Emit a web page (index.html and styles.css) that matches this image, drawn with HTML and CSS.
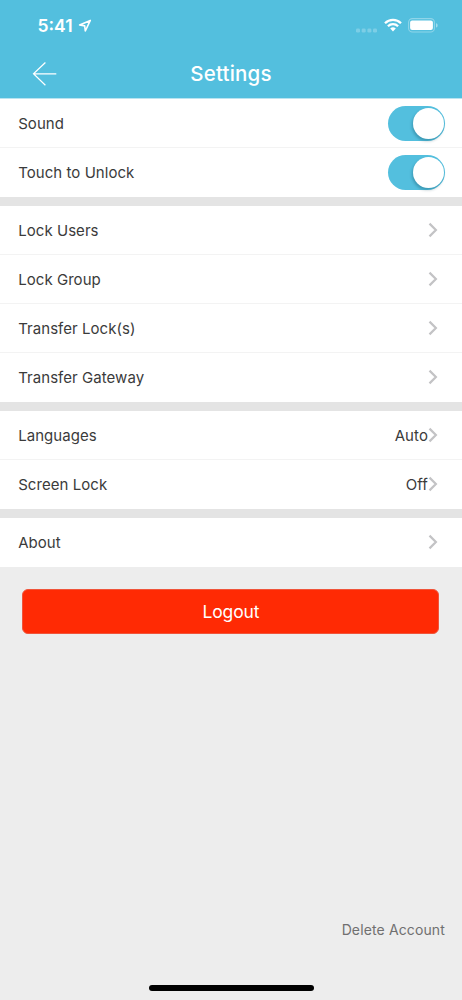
FILE: index.html
```html
<!DOCTYPE html>
<html lang="en">
<head>
<meta charset="utf-8">
<title>Settings</title>
<link rel="stylesheet" href="styles.css">
</head>
<body>
<svg class="defs" width="0" height="0" aria-hidden="true">
  <symbol id="chevron" viewBox="0 0 10 16"><path d="M1.5 1.6 7.9 8 1.5 14.4" fill="none" stroke="#c3c3c5" stroke-width="2.2"/></symbol>
</svg>
<div class="screen">
  <header class="header">
    <div class="status">
      <span class="time">5:41</span>
      <svg class="location" width="14" height="14" viewBox="0 0 14 14"><path d="M12.3 1.4 1.6 6 6.7 6.9 7.3 12Z" fill="none" stroke="#fff" stroke-width="1.6" stroke-linejoin="round"/></svg>
      <svg class="signal" width="22" height="5" viewBox="0 0 22 5" fill="#fff" fill-opacity=".24"><rect x="0" y=".5" width="4" height="4" rx="1.3"/><rect x="5.7" y=".5" width="4" height="4" rx="1.3"/><rect x="11.4" y=".5" width="4" height="4" rx="1.3"/><rect x="17" y=".5" width="4" height="4" rx="1.3"/></svg>
      <svg class="wifi" width="18" height="14" viewBox="0 0 18 14"><g fill="none" stroke="#fff" stroke-width="2.3"><path d="M1 5.2a11.4 11.4 0 0 1 16 0"/><path d="M3.9 8.3a7.3 7.3 0 0 1 10.2 0"/></g><path d="M9 13.4 6.2 10.6a4 4 0 0 1 5.6 0Z" fill="#fff"/></svg>
      <svg class="battery" width="31" height="15" viewBox="0 0 31 15"><rect x=".6" y=".6" width="25.8" height="13.4" rx="3.8" fill="none" stroke="#fff" stroke-opacity=".35" stroke-width="1.1"/><rect x="2.1" y="2.6" width="22.8" height="9.4" rx="2" fill="#fff"/><path d="M28 5.2c2.2.6 2.2 3.8 0 4.4Z" fill="#fff" fill-opacity=".45"/></svg>
    </div>
    <div class="navbar">
      <svg class="back" width="26" height="26" viewBox="0 0 26 26"><path d="M13.4 1.5 1.5 12.8 13.4 24.2M1.5 12.8H24.3" fill="none" stroke="#fff" stroke-width="1.2"/></svg>
      <h1 class="title">Settings</h1>
    </div>
  </header>
  <main class="groups">
    <section class="group">
      <div class="row"><span class="label">Sound</span><span class="toggle"><i class="knob"></i></span></div>
      <div class="row"><span class="label">Touch to Unlock</span><span class="toggle"><i class="knob"></i></span></div>
    </section>
    <section class="group">
      <div class="row"><span class="label">Lock Users</span><svg class="chevron"><use href="#chevron"/></svg></div>
      <div class="row"><span class="label">Lock Group</span><svg class="chevron"><use href="#chevron"/></svg></div>
      <div class="row"><span class="label">Transfer Lock(s)</span><svg class="chevron"><use href="#chevron"/></svg></div>
      <div class="row"><span class="label">Transfer Gateway</span><svg class="chevron"><use href="#chevron"/></svg></div>
    </section>
    <section class="group">
      <div class="row"><span class="label">Languages</span><span class="value">Auto</span><svg class="chevron"><use href="#chevron"/></svg></div>
      <div class="row"><span class="label">Screen Lock</span><span class="value">Off</span><svg class="chevron"><use href="#chevron"/></svg></div>
    </section>
    <section class="group">
      <div class="row"><span class="label">About</span><svg class="chevron"><use href="#chevron"/></svg></div>
    </section>
  </main>
  <button class="logout">Logout</button>
  <footer class="footer">
    <span class="delete">Delete Account</span>
    <div class="home"></div>
  </footer>
</div>
</body>
</html>
```
FILE: styles.css
```css
* { box-sizing: border-box; }
body { margin: 0; font-family: Inter, "Liberation Sans", sans-serif; color: #3b3b3b; }
.defs { display: block; }
.screen { width: 462px; height: 1000px; display: flex; flex-direction: column; background: #ededed; overflow: hidden; }
.header { height: 99px; background: #53bfde; border-bottom: 1px solid #b9e4f1; color: #fff; }
.status { height: 49px; padding: 2px 23px 0 37.5px; display: flex; align-items: center; }
.time { width: 36px; font-size: 17.5px; font-weight: 600; letter-spacing: 0; white-space: nowrap; }
.location { margin-left: 4px; }
.signal { margin: 9px 6px 0 auto; }
.wifi { margin-right: 6px; margin-bottom: 1px; }
.battery { flex: none; }
.navbar { height: 49px; display: grid; grid-template-columns: 72px 1fr 72px; align-items: center; }
.back { margin-left: 32px; }
.title { margin: 0; text-align: center; font-size: 20.5px; font-weight: 500; letter-spacing: 0.2px; }
.groups { display: flex; flex-direction: column; gap: 9px; background: #e4e4e4; }
.group { background: #fff; }
.row { height: 49px; padding: 0 17px 0 18.2px; display: flex; align-items: center; box-shadow: inset 0 -1px #f3f3f3; }
.row:last-child { box-shadow: none; }
.label { flex: 1; font-size: 15px; letter-spacing: 0.05px; }
.value { font-size: 15px; letter-spacing: 0.1px; }
.chevron { width: 10px; height: 16px; margin-right: 7px; margin-top: -1px; }
.toggle { width: 57px; height: 35px; padding: 2px 1.5px; border-radius: 18px; background: #53bfde; display: flex; justify-content: flex-end; }
.knob { width: 31px; height: 31px; border-radius: 50%; background: #fff; box-shadow: -1px 2px 3px rgba(0, 60, 80, .3); }
.logout { margin: 22px 22px 0 22.4px; width: 417px; height: 45px; padding: 0; border: 1px solid #f0543a; border-radius: 6px; background: #ff2a04; color: #fff; font: 400 17.5px Inter, "Liberation Sans", sans-serif; letter-spacing: -0.15px; }
.footer { margin-top: auto; display: flex; flex-direction: column; }
.delete { align-self: flex-end; margin-right: 17px; font-size: 14px; line-height: 18px; letter-spacing: 0.13px; color: #707070; }
.home { width: 165px; height: 6px; margin: 46px auto 9px; border-radius: 3px; background: #000; }
```
